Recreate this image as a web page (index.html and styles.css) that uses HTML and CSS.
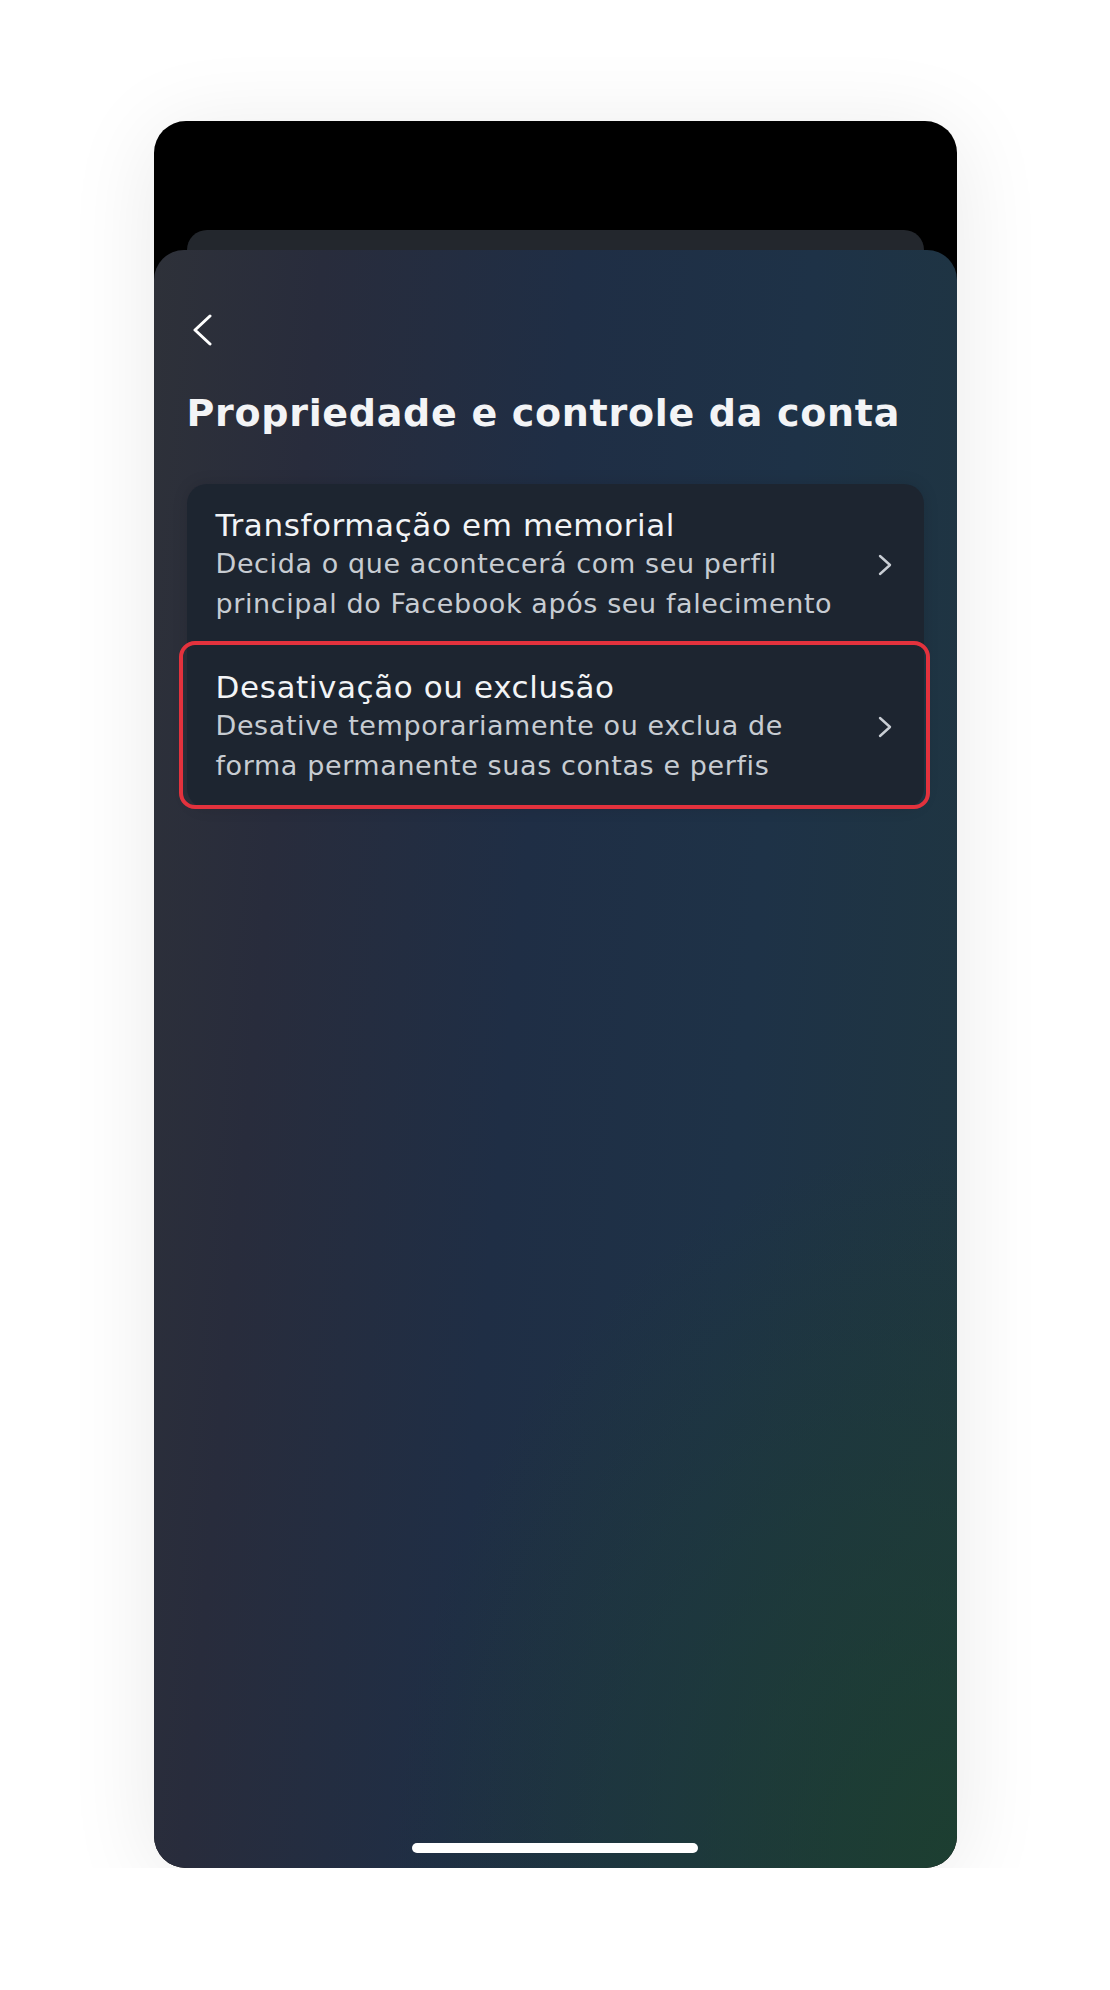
FILE: index.html
```html
<!DOCTYPE html>
<html lang="pt-BR">
<head>
    <meta charset="UTF-8">
    <meta name="viewport" content="width=device-width, initial-scale=1.0">
    <title>Propriedade e controle da conta</title>
    <link rel="stylesheet" href="styles.css">
</head>
<body>
    <div class="phone">
        <div class="peek-card"></div>

        <div class="sheet">
            <div class="back-btn">
                <svg width="22" height="32" viewBox="0 0 22 32">
                    <path d="M19 2 L4 16 L19 30" fill="none" stroke="#fff" stroke-width="3" stroke-linecap="round" stroke-linejoin="round"/>
                </svg>
            </div>

            <h1 class="page-title">Propriedade e controle da conta</h1>

            <ul class="options">
                <li class="option">
                    <div class="option-text">
                        <div class="option-title">Transformação em memorial</div>
                        <div class="option-desc">Decida o que acontecerá com seu perfil principal do Facebook após seu falecimento</div>
                    </div>
                    <svg class="chevron" width="16" height="24" viewBox="0 0 16 24">
                        <path d="M3 3 L13 12 L3 21" fill="none" stroke="#c9ced4" stroke-width="2.4" stroke-linecap="round" stroke-linejoin="round"/>
                    </svg>
                </li>
                <li class="option highlighted">
                    <div class="option-text">
                        <div class="option-title">Desativação ou exclusão</div>
                        <div class="option-desc">Desative temporariamente ou exclua de forma permanente suas contas e perfis</div>
                    </div>
                    <svg class="chevron" width="16" height="24" viewBox="0 0 16 24">
                        <path d="M3 3 L13 12 L3 21" fill="none" stroke="#c9ced4" stroke-width="2.4" stroke-linecap="round" stroke-linejoin="round"/>
                    </svg>
                    <span class="marker"></span>
                </li>
            </ul>

            <div class="home-bar"></div>
        </div>
    </div>
</body>
</html>
```

FILE: styles.css
```css
/* General styles */
body {
    font-family: "DejaVu Sans", "Open Sans", Arial, sans-serif;
    margin: 0;
    padding: 0;
    background-color: #fff;
}
.phone {
    width: 803px;
    height: 1747px;
    margin: 121px auto 0;
    background-color: #000;
    border-radius: 32px;
    overflow: hidden;
    display: flex;
    flex-direction: column;
    box-shadow: 0 10px 90px rgba(0, 0, 0, 0.09);
}
.peek-card {
    height: 20px;
    margin: 109px 33px 0 33px;
    background-color: #23272d;
    border-radius: 26px 26px 0 0;
}
.sheet {
    flex: 1;
    display: flex;
    flex-direction: column;
    padding: 64px 33px 15px 33px;
    border-radius: 30px 30px 0 0;
    background:
        radial-gradient(ellipse 70% 45% at 100% 100%, rgba(28, 64, 46, 0.85), rgba(28, 64, 46, 0)),
        linear-gradient(95deg, #2e3139 0%, #282c3c 18%, #1f2e45 45%, #1e3247 70%, #1f3640 100%);
}
.back-btn {
    margin-left: 4px;
    height: 32px;
}
.page-title {
    margin: 44px 0 0;
    font-size: 38px;
    font-weight: 700;
    color: #f3f4f6;
    letter-spacing: 0.7px;
    line-height: 46px;
}
.options {
    list-style: none;
    margin: 48px 0 0;
    padding: 0;
    background-color: #1d2530;
    border-radius: 20px;
    box-shadow: 0 0 16px rgba(0, 0, 0, 0.12);
}
.option {
    position: relative;
    display: flex;
    align-items: center;
    padding: 22px 31px 22px 29px;
}
.option-text {
    flex: 1;
    padding-right: 40px;
}
.option-title {
    font-size: 31px;
    color: #f2f4f6;
    letter-spacing: 0.6px;
    line-height: 38px;
}
.option-desc {
    font-size: 27px;
    color: #c7ccd2;
    letter-spacing: 0.6px;
    line-height: 40px;
}
.chevron {
    flex-shrink: 0;
}

/* Annotation box round the chosen row */
.marker {
    position: absolute;
    top: -5px;
    bottom: -1px;
    left: -8px;
    right: -6px;
    border: 4px solid #e3323d;
    border-radius: 16px;
}
.home-bar {
    margin: auto auto 0;
    width: 286px;
    height: 10px;
    border-radius: 5px;
    background-color: #fff;
}
```
